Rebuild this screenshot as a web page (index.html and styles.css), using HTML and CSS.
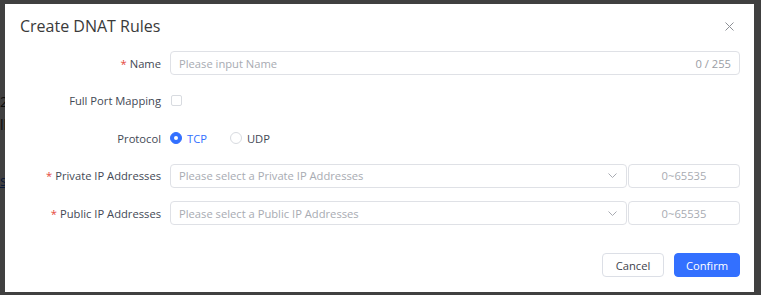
FILE: index.html
```html
<!DOCTYPE html>
<html>
<head>
<meta charset="utf-8">
<link rel="stylesheet" href="styles.css">
</head>
<body>
<div class="behind">
  <div class="frag frag-a">2(</div>
  <div class="frag frag-b">ll</div>
  <div class="frag frag-c">s</div>
</div>
<div class="overlay">
  <div class="dialog">
    <div class="header">
      <div class="title">Create DNAT Rules</div>
      <svg class="close" width="9" height="9" viewBox="0 0 9 9"><path d="M0.5 0.5 L8.5 8.5 M8.5 0.5 L0.5 8.5" stroke="#8d9096" stroke-width="1" fill="none"/></svg>
    </div>
    <div class="form">
      <div class="row">
        <div class="label"><span class="req">*</span>Name</div>
        <div class="control input">
          <span class="placeholder">Please input Name</span>
          <span class="count">0 / 255</span>
        </div>
      </div>
      <div class="row">
        <div class="label">Full Port Mapping</div>
        <div class="control"><span class="checkbox"></span></div>
      </div>
      <div class="row">
        <div class="label">Protocol</div>
        <div class="control radios">
          <span class="radio checked"><span class="dot"></span><span class="rtext">TCP</span></span>
          <span class="radio"><span class="dot"></span><span class="rtext">UDP</span></span>
        </div>
      </div>
      <div class="row">
        <div class="label"><span class="req">*</span>Private IP Addresses</div>
        <div class="control pair">
          <div class="input select">
            <span class="placeholder">Please select a Private IP Addresses</span>
            <svg class="chev" width="9" height="5" viewBox="0 0 9 5"><path d="M0.5 0.5 L4.5 4.5 L8.5 0.5" stroke="#a8abb2" stroke-width="1" fill="none"/></svg>
          </div>
          <div class="input port"><span class="placeholder">0~65535</span></div>
        </div>
      </div>
      <div class="row">
        <div class="label"><span class="req">*</span>Public IP Addresses</div>
        <div class="control pair">
          <div class="input select">
            <span class="placeholder">Please select a Public IP Addresses</span>
            <svg class="chev" width="9" height="5" viewBox="0 0 9 5"><path d="M0.5 0.5 L4.5 4.5 L8.5 0.5" stroke="#a8abb2" stroke-width="1" fill="none"/></svg>
          </div>
          <div class="input port"><span class="placeholder">0~65535</span></div>
        </div>
      </div>
    </div>
    <div class="footer">
      <button class="btn">Cancel</button>
      <button class="btn primary">Confirm</button>
    </div>
  </div>
</div>
</body>
</html>
```
FILE: styles.css
```css
html, body {
  margin: 0;
  padding: 0;
}
body {
  width: 761px;
  height: 295px;
  overflow: hidden;
  background: #ffffff;
  font-family: "Open Sans", "DejaVu Sans", sans-serif;
  position: relative;
}
.behind {
  display: flex;
  flex-direction: column;
  padding-top: 92px;
  color: #333;
  font-size: 14px;
  line-height: 20px;
}
.frag {
  margin-left: 0;
}
.frag-b {
  margin-top: 3px;
}
.frag-c {
  margin-top: 36px;
  color: #2f6ae0;
  text-decoration: underline;
}
.overlay {
  position: absolute;
  inset: 0;
  background: rgba(0, 0, 0, 0.75);
  padding: 4px 7px 3px 5px;
  box-sizing: border-box;
}
.dialog {
  width: 749px;
  height: 288px;
  background: #fff;
  box-sizing: border-box;
}
.header {
  display: flex;
  justify-content: space-between;
  align-items: center;
  padding: 10px 20px 13px 15px;
  height: 24px;
  box-sizing: content-box;
}
.title {
  font-size: 16px;
  line-height: 24px;
  color: #3a3a3a;
}
.close {
  display: block;
}
.form {
  display: flex;
  flex-direction: column;
  gap: 13.5px;
  padding: 0 14px 0 20px;
  font-size: 11.2px;
}
.row {
  display: flex;
  align-items: center;
  height: 24px;
}
.label {
  width: 145px;
  padding-right: 9px;
  box-sizing: border-box;
  text-align: right;
  color: #434955;
  white-space: nowrap;
}
.req {
  color: #e5483d;
  margin-right: 3px;
}
.control {
  flex: 1;
  height: 24px;
  display: flex;
  align-items: center;
}
.input {
  border: 1px solid #dfe1e6;
  border-radius: 4px;
  box-sizing: border-box;
  height: 24px;
  display: flex;
  align-items: center;
  justify-content: space-between;
  padding: 0 8px;
}
.placeholder {
  color: #a8abb2;
}
.count {
  color: #9a9da4;
}
.checkbox {
  width: 11px;
  height: 11px;
  border: 1px solid #d8dbe0;
  border-radius: 2px;
  box-sizing: border-box;
  margin-left: 1px;
}
.radios {
  gap: 23px;
}
.radio {
  display: flex;
  align-items: center;
  gap: 5px;
  color: #434955;
}
.radio .dot {
  width: 12px;
  height: 12px;
  border-radius: 50%;
  border: 1px solid #d8dbe0;
  box-sizing: border-box;
  display: flex;
  align-items: center;
  justify-content: center;
}
.radio.checked .dot {
  background: #3370ff;
  border-color: #3370ff;
}
.radio.checked .dot::after {
  content: "";
  width: 4px;
  height: 4px;
  border-radius: 50%;
  background: #fff;
}
.radio.checked .rtext {
  color: #3370ff;
}
.pair {
  gap: 1px;
}
.select {
  width: 457px;
  padding-right: 9px;
}
.chev {
  display: block;
}
.port {
  flex: 1;
  justify-content: center;
}
.footer {
  display: flex;
  justify-content: flex-end;
  gap: 10px;
  margin-top: 28px;
  padding-right: 14px;
}
.btn {
  font-family: "Open Sans", "DejaVu Sans", sans-serif;
  font-size: 11.2px;
  height: 24px;
  border-radius: 4px;
  border: 1px solid #dcdfe6;
  background: #fff;
  color: #3d424c;
  padding: 0;
  width: 62px;
}
.btn.primary {
  width: 66px;
  background: #3370ff;
  border-color: #3370ff;
  color: #fff;
}
```
